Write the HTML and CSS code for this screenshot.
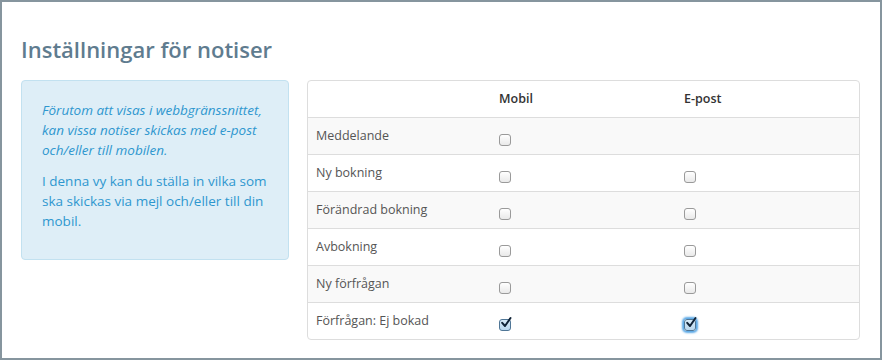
FILE: index.html
```html
<!DOCTYPE html>
<html lang="sv">
<head>
<meta charset="utf-8">
<title>Inställningar för notiser</title>
<link rel="stylesheet" href="styles.css">
</head>
<body>
<div class="frame">
  <h1 class="title">Inställningar för notiser</h1>
  <div class="layout">
    <div class="info">
      <p class="lead">Förutom att visas i webbgränssnittet, kan vissa notiser skickas med e-post och/eller till mobilen.</p>
      <p>I denna vy kan du ställa in vilka som ska skickas via mejl och/eller till din mobil.</p>
    </div>
    <div class="table-wrap">
      <table class="settings">
        <thead>
          <tr><th></th><th>Mobil</th><th>E-post</th></tr>
        </thead>
        <tbody>
          <tr><td>Meddelande</td><td><span class="cb"></span></td><td></td></tr>
          <tr><td>Ny bokning</td><td><span class="cb"></span></td><td><span class="cb"></span></td></tr>
          <tr><td>Förändrad bokning</td><td><span class="cb"></span></td><td><span class="cb"></span></td></tr>
          <tr><td>Avbokning</td><td><span class="cb"></span></td><td><span class="cb"></span></td></tr>
          <tr><td>Ny förfrågan</td><td><span class="cb"></span></td><td><span class="cb"></span></td></tr>
          <tr><td>Förfrågan: Ej bokad</td>
            <td><span class="cb checked"><svg class="tick" viewBox="0 0 14 14" width="14" height="14"><path d="M3.2 6.8 L6 10 L11.5 2" fill="none" stroke="#0f2236" stroke-width="2" stroke-linecap="round" stroke-linejoin="round"/></svg></span></td>
            <td><span class="cb checked focus"><svg class="tick" viewBox="0 0 14 14" width="14" height="14"><path d="M3.2 6.8 L6 10 L11.5 2" fill="none" stroke="#0f2236" stroke-width="2" stroke-linecap="round" stroke-linejoin="round"/></svg></span></td>
          </tr>
        </tbody>
      </table>
    </div>
  </div>
</div>
</body>
</html>
```
FILE: styles.css
```css
html, body {
  margin: 0;
  padding: 0;
  background: #ffffff;
}
.frame {
  box-sizing: border-box;
  width: 882px;
  height: 360px;
  border: 2px solid #86959e;
  padding: 0 20px 0 19px;
  font-family: "Open Sans", "Liberation Sans", sans-serif;
}
.title {
  margin: 0;
  padding-top: 31px;
  font-size: 22px;
  line-height: 32px;
  font-weight: 600;
  color: #5f7c8f;
}
.layout {
  display: grid;
  grid-template-columns: 268px 553px;
  column-gap: 18px;
  margin-top: 15px;
  align-items: start;
}
.info {
  box-sizing: border-box;
  height: 180px;
  background: #deeef7;
  border: 1px solid #c2e1f0;
  border-radius: 4px;
  padding: 19px 18px 0 20px;
  color: #2e97cf;
  font-size: 13.5px;
  line-height: 20px;
}
.info p {
  margin: 0 0 11px 0;
}
.info .lead {
  font-style: italic;
}
.table-wrap {
  border: 1px solid #dddddd;
  border-radius: 4px;
  overflow: hidden;
}
.settings {
  width: 100%;
  border-collapse: collapse;
  table-layout: fixed;
  font-size: 12.5px;
  line-height: 20px;
  color: #555555;
}
.settings th, .settings td {
  padding: 8px;
  text-align: left;
  vertical-align: top;
  height: 20px;
}
.settings th {
  font-weight: 600;
  color: #333333;
}
.settings td {
  border-top: 1px solid #dddddd;
}
.settings th:first-child, .settings td:first-child { width: 167px; }
.settings th:nth-child(2), .settings td:nth-child(2) { width: 169px; }
.settings tbody tr:nth-child(odd) td {
  background: #f9f9f9;
}
.cb {
  display: inline-block;
  position: relative;
  box-sizing: border-box;
  width: 12px;
  height: 12px;
  margin-top: 8px;
  border: 1px solid #9a9a9a;
  border-radius: 3px;
  background: linear-gradient(#ffffff, #e9e9e9);
  vertical-align: top;
}
.cb.checked {
  background: linear-gradient(#d8ebf8, #b9d7ee);
  border-color: #4f7696;
}
.cb.focus {
  box-shadow: 0 0 2px 2px #5aa8e6;
}
.tick {
  position: absolute;
  left: -1px;
  top: -4px;
}
```
